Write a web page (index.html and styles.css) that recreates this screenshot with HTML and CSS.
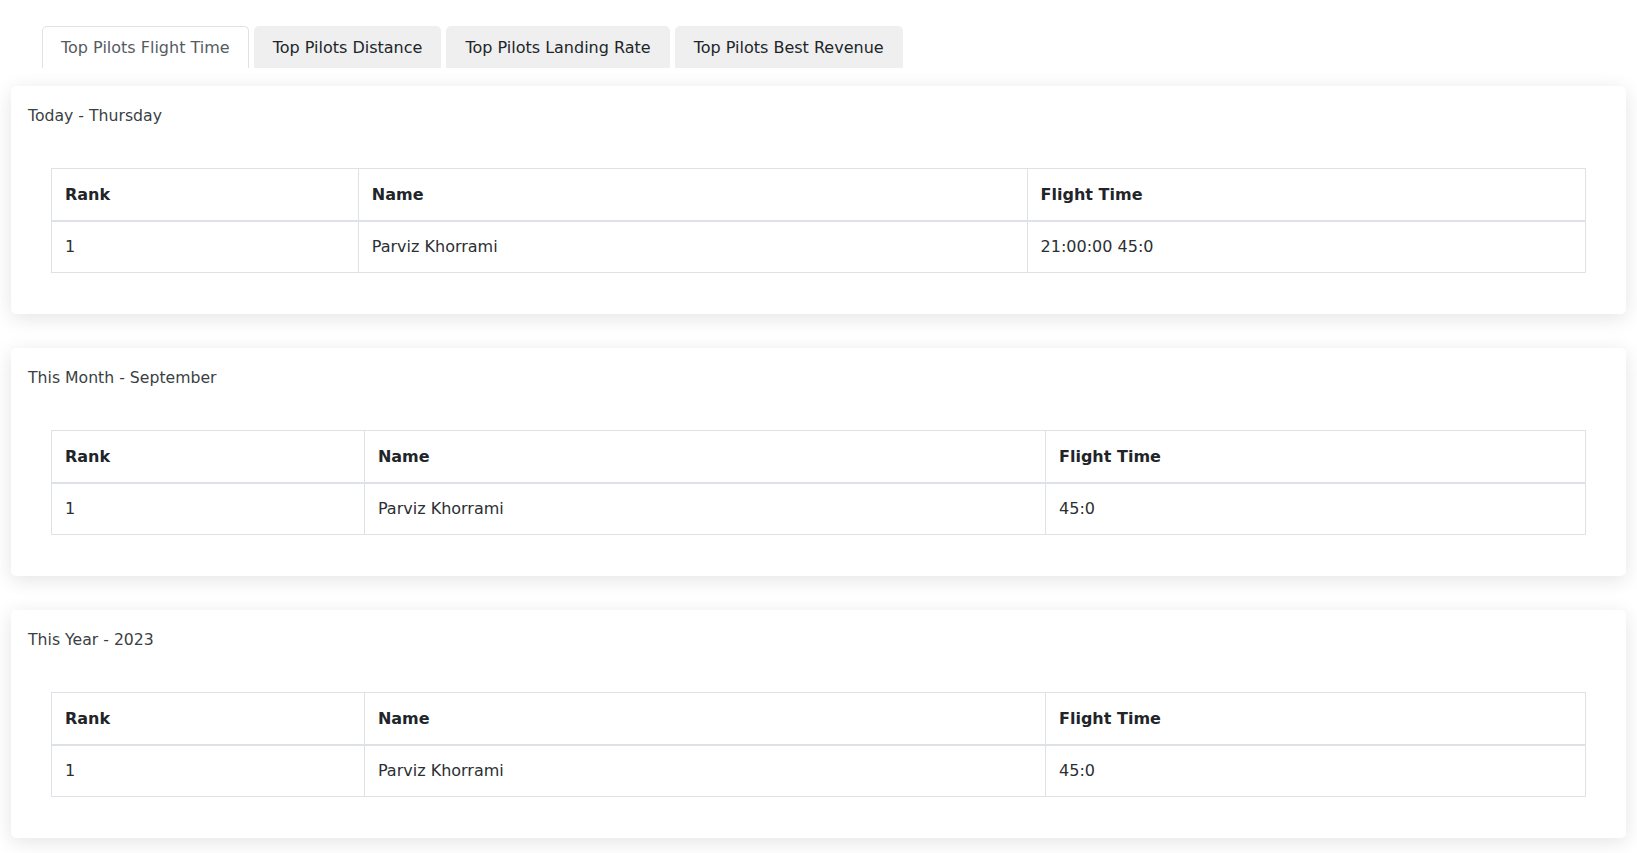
FILE: index.html
```html
<!DOCTYPE html>
<html lang="en">
<head>
<meta charset="utf-8">
<title>Top Pilots</title>
<link rel="stylesheet" href="styles.css">
</head>
<body>
<div class="page">
  <ul class="tabs">
    <li class="tab active">Top Pilots Flight Time</li>
    <li class="tab">Top Pilots Distance</li>
    <li class="tab">Top Pilots Landing Rate</li>
    <li class="tab">Top Pilots Best Revenue</li>
  </ul>

  <section class="card">
    <h2 class="card-title">Today - Thursday</h2>
    <div class="card-body">
      <table class="rank-table rank-table--long">
        <colgroup><col class="col-rank"><col class="col-name"><col class="col-time"></colgroup>
        <thead><tr><th>Rank</th><th>Name</th><th>Flight Time</th></tr></thead>
        <tbody><tr><td>1</td><td>Parviz Khorrami</td><td>21:00:00 45:0</td></tr></tbody>
      </table>
    </div>
  </section>

  <section class="card">
    <h2 class="card-title">This Month - September</h2>
    <div class="card-body">
      <table class="rank-table">
        <colgroup><col class="col-rank"><col class="col-name"><col class="col-time"></colgroup>
        <thead><tr><th>Rank</th><th>Name</th><th>Flight Time</th></tr></thead>
        <tbody><tr><td>1</td><td>Parviz Khorrami</td><td>45:0</td></tr></tbody>
      </table>
    </div>
  </section>

  <section class="card">
    <h2 class="card-title">This Year - 2023</h2>
    <div class="card-body">
      <table class="rank-table">
        <colgroup><col class="col-rank"><col class="col-name"><col class="col-time"></colgroup>
        <thead><tr><th>Rank</th><th>Name</th><th>Flight Time</th></tr></thead>
        <tbody><tr><td>1</td><td>Parviz Khorrami</td><td>45:0</td></tr></tbody>
      </table>
    </div>
  </section>
</div>
</body>
</html>
```

FILE: styles.css
```css
* { box-sizing: border-box; }

html, body {
  margin: 0;
  padding: 0;
  background: #ffffff;
}

body {
  font-family: "DejaVu Sans", "Liberation Sans", sans-serif;
  color: #212529;
  font-size: 16px;
}

.page {
  padding: 26px 11px 20px 11px;
}

.tabs {
  list-style: none;
  margin: 0 0 18px 0;
  padding: 0 0 0 31px;
  display: flex;
  gap: 5px;
}

.tab {
  height: 42px;
  display: flex;
  align-items: center;
  padding: 0 18px;
  background: #efefef;
  border: 1px solid #efefef;
  border-bottom: none;
  border-radius: 5px 5px 0 0;
  font-size: 16px;
  color: #212529;
  white-space: nowrap;
}

.tab.active {
  background: #ffffff;
  border-color: #dee2e6;
  color: #555b61;
}

.card {
  background: #ffffff;
  border-radius: 5px;
  box-shadow: 0 4px 20px rgba(0, 0, 0, 0.11);
  margin-bottom: 34px;
}

.card-title {
  margin: 0;
  padding: 19px 17px 0 17px;
  font-size: 15.7px;
  font-weight: normal;
  line-height: 21px;
  color: #3a3f44;
}

.card-body {
  padding: 42px 40px 41px 40px;
}

.rank-table {
  width: 100%;
  table-layout: fixed;
  border-collapse: collapse;
  font-size: 16px;
  line-height: 24px;
}

.rank-table .col-rank { width: 20.4%; }
.rank-table .col-name { width: 44.4%; }
.rank-table .col-time { width: 35.2%; }

.rank-table--long .col-rank { width: 20%; }
.rank-table--long .col-name { width: 43.6%; }
.rank-table--long .col-time { width: 36.4%; }

.rank-table th,
.rank-table td {
  border: 1px solid #dee2e6;
  padding: 13px 13px;
  text-align: left;
  vertical-align: middle;
}

.rank-table th {
  font-weight: bold;
  color: #212529;
  padding-top: 14px;
  padding-bottom: 13px;
  border-bottom: 2px solid #dee2e6;
}

.rank-table td {
  color: #2b2f33;
}
```
